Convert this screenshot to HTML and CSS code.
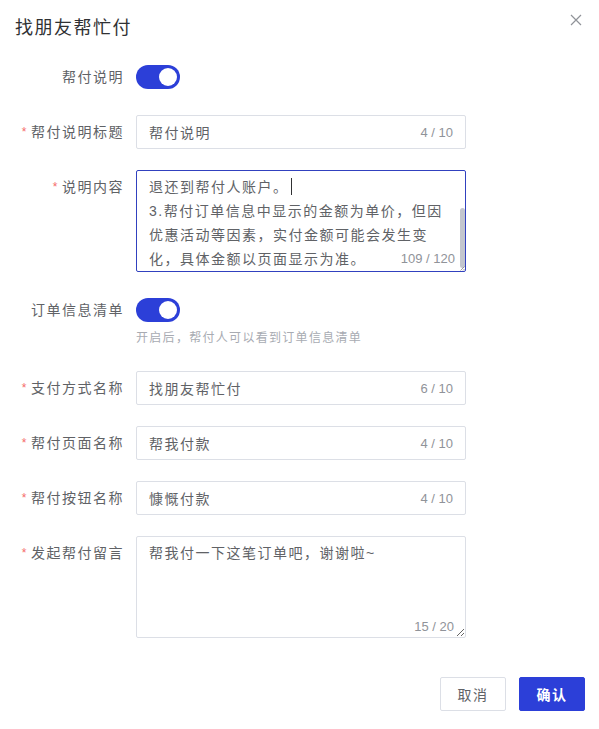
FILE: index.html
```html
<!DOCTYPE html>
<html lang="zh-CN">
<head>
    <meta charset="UTF-8">
    <meta name="viewport" content="width=device-width, initial-scale=1.0">
    <title>找朋友帮忙付</title>
    <link rel="stylesheet" href="styles.css">
</head>
<body>
    <div class="dialog">
        <div class="dialog-header">
            <span class="dialog-title">找朋友帮忙付</span>
            <button class="dialog-close" type="button" aria-label="关闭">
                <svg width="12" height="12" viewBox="0 0 12 12">
                    <path d="M1 1 L11 11 M11 1 L1 11" stroke="#909399" stroke-width="1.2" fill="none"/>
                </svg>
            </button>
        </div>

        <form class="form">
            <div class="form-item">
                <label class="form-label">帮付说明</label>
                <div class="form-content">
                    <span class="switch is-on"><span class="switch-knob"></span></span>
                </div>
            </div>

            <div class="form-item">
                <label class="form-label"><span class="required">*</span>帮付说明标题</label>
                <div class="form-content">
                    <div class="input">
                        <span class="input-text">帮付说明</span>
                        <span class="count">4 / 10</span>
                    </div>
                </div>
            </div>

            <div class="form-item">
                <label class="form-label label-top"><span class="required">*</span>说明内容</label>
                <div class="form-content">
                    <div class="textarea is-focus">
                        <div class="textarea-line">退还到帮付人账户。<span class="caret"></span></div>
                        <div class="textarea-line">3.帮付订单信息中显示的金额为单价，但因</div>
                        <div class="textarea-line">优惠活动等因素，实付金额可能会发生变</div>
                        <div class="textarea-line">化，具体金额以页面显示为准。</div>
                        <span class="count textarea-count">109 / 120</span>
                        <span class="scroll-thumb"></span>
                        <svg class="grip" width="6" height="6" viewBox="0 0 6 6">
                            <path d="M5.5 1.5 L1.5 5.5 M5.5 4 L4 5.5" stroke="#888" stroke-width="0.8"/>
                        </svg>
                    </div>
                </div>
            </div>

            <div class="form-item">
                <label class="form-label">订单信息清单</label>
                <div class="form-content">
                    <div class="switch-row">
                        <span class="switch is-on"><span class="switch-knob"></span></span>
                    </div>
                    <div class="form-help">开启后，帮付人可以看到订单信息清单</div>
                </div>
            </div>

            <div class="form-item">
                <label class="form-label"><span class="required">*</span>支付方式名称</label>
                <div class="form-content">
                    <div class="input">
                        <span class="input-text">找朋友帮忙付</span>
                        <span class="count">6 / 10</span>
                    </div>
                </div>
            </div>

            <div class="form-item">
                <label class="form-label"><span class="required">*</span>帮付页面名称</label>
                <div class="form-content">
                    <div class="input">
                        <span class="input-text">帮我付款</span>
                        <span class="count">4 / 10</span>
                    </div>
                </div>
            </div>

            <div class="form-item">
                <label class="form-label"><span class="required">*</span>帮付按钮名称</label>
                <div class="form-content">
                    <div class="input">
                        <span class="input-text">慷慨付款</span>
                        <span class="count">4 / 10</span>
                    </div>
                </div>
            </div>

            <div class="form-item">
                <label class="form-label label-top"><span class="required">*</span>发起帮付留言</label>
                <div class="form-content">
                    <div class="textarea-wrap">
                        <textarea class="native-textarea" readonly>帮我付一下这笔订单吧，谢谢啦~</textarea>
                        <span class="count textarea-count">15 / 20</span>
                    </div>
                </div>
            </div>
        </form>

        <div class="dialog-footer">
            <button class="btn" type="button">取消</button>
            <button class="btn btn-primary" type="button">确认</button>
        </div>
    </div>
</body>
</html>
```

FILE: styles.css
```css
body {
    margin: 0;
    background: #ffffff;
    font-family: "Liberation Sans", "Noto Sans CJK SC", sans-serif;
    color: #606266;
}
.dialog {
    position: relative;
    width: 599px;
}
.dialog-header {
    padding: 16px 15px 0;
}
.dialog-title {
    display: block;
    font-size: 18px;
    line-height: 24px;
    letter-spacing: 1.5px;
    color: #303133;
}
.dialog-close {
    position: absolute;
    top: 14px;
    right: 17px;
    width: 12px;
    height: 12px;
    padding: 0;
    border: none;
    background: none;
    display: flex;
}
.form {
    padding-top: 20px;
}
.form-item {
    display: flex;
    margin-bottom: 21px;
}
.form-item:last-child {
    margin-bottom: 0;
}
.form-label {
    width: 136px;
    flex-shrink: 0;
    box-sizing: border-box;
    padding-right: 12px;
    text-align: right;
    font-size: 14px;
    line-height: 34px;
    letter-spacing: 1.5px;
    color: #606266;
}
.required {
    color: #f56c6c;
    font-size: 12px;
    margin-right: 3px;
    vertical-align: top;
}
.form-content {
    width: 330px;
}
.switch-row {
    height: 34px;
    display: flex;
    align-items: center;
}
.form-content > .switch {
    margin-top: 5px;
}
.switch {
    display: flex;
    align-items: center;
    justify-content: flex-end;
    box-sizing: border-box;
    width: 44px;
    height: 24px;
    padding: 0 3px;
    border-radius: 12px;
    background: #dcdfe6;
}
.switch.is-on {
    background: #2c3fd8;
}
.switch-knob {
    width: 18px;
    height: 18px;
    border-radius: 50%;
    background: #ffffff;
}
.form-help {
    font-size: 12px;
    line-height: 23px;
    letter-spacing: 1.3px;
    color: #a8abb2;
}
.input {
    display: flex;
    align-items: center;
    justify-content: space-between;
    box-sizing: border-box;
    height: 34px;
    padding: 0 12px;
    border: 1px solid #dcdfe6;
    border-radius: 2px;
    font-size: 14px;
    letter-spacing: 1.5px;
}
.count {
    font-size: 13px;
    letter-spacing: 0;
    color: #909399;
    background: #ffffff;
}
.textarea {
    position: relative;
    box-sizing: border-box;
    height: 102px;
    padding: 4px 12px;
    border: 1px solid #3141bf;
    border-radius: 2px;
    font-size: 14px;
    line-height: 24px;
    letter-spacing: 1.5px;
    white-space: nowrap;
    overflow: hidden;
}
.caret {
    display: inline-block;
    width: 1px;
    height: 17px;
    margin-left: 2px;
    vertical-align: -3px;
    background: #303133;
}
.textarea-count {
    position: absolute;
    right: 10px;
    bottom: 4px;
    line-height: 16px;
}
.scroll-thumb {
    position: absolute;
    top: 37px;
    right: 0;
    width: 5px;
    height: 60px;
    border-radius: 3px;
    background: #c3c6ce;
}
.grip {
    position: absolute;
    right: 0;
    bottom: 0;
}
.textarea-wrap {
    position: relative;
}
.native-textarea {
    display: block;
    box-sizing: border-box;
    width: 330px;
    height: 102px;
    margin: 0;
    padding: 4px 12px;
    border: 1px solid #dcdfe6;
    border-radius: 2px;
    font-family: "Liberation Sans", "Noto Sans CJK SC", sans-serif;
    font-size: 14px;
    line-height: 24px;
    letter-spacing: 1.5px;
    color: #606266;
    resize: vertical;
    outline: none;
}
.native-textarea + .textarea-count {
    right: 12px;
    bottom: 3px;
}
.dialog-footer {
    display: flex;
    justify-content: flex-end;
    gap: 13px;
    padding: 39px 14px 18px;
}
.btn {
    box-sizing: border-box;
    width: 66px;
    height: 34px;
    padding: 0;
    border: 1px solid #dcdfe6;
    border-radius: 2px;
    background: #ffffff;
    font-family: "Liberation Sans", "Noto Sans CJK SC", sans-serif;
    font-size: 14px;
    letter-spacing: 1.5px;
    color: #606266;
}
.btn-primary {
    border-color: #2c3fd8;
    background: #2c3fd8;
    color: #ffffff;
    font-weight: bold;
}
```
